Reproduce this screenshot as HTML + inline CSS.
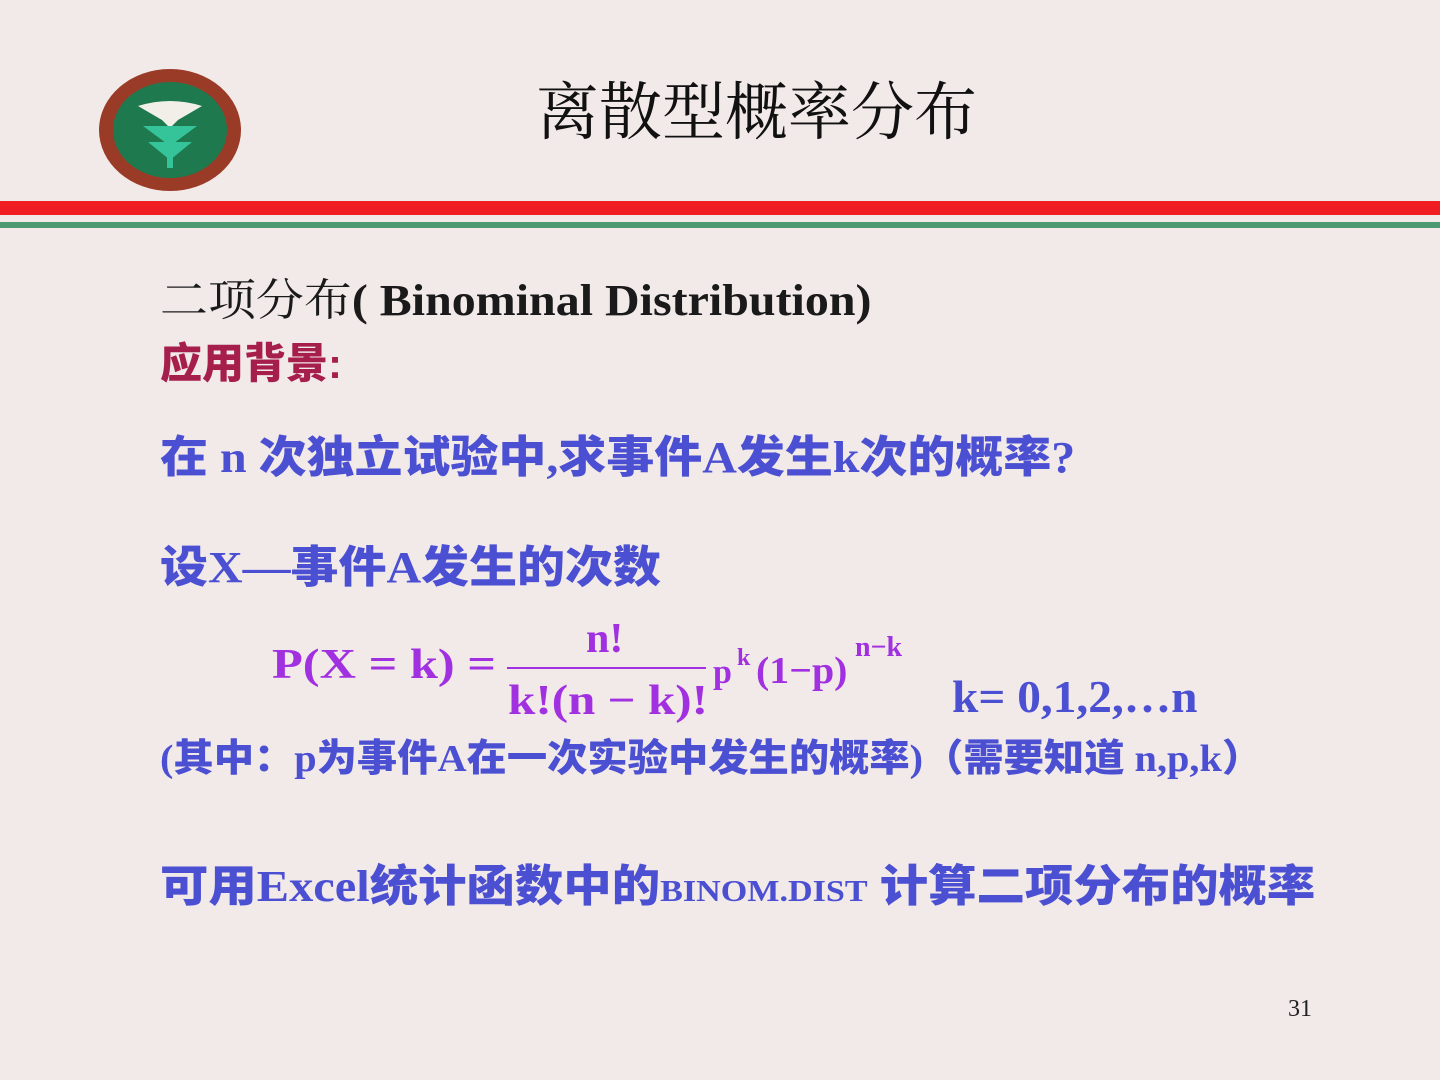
<!DOCTYPE html>
<html><head><meta charset="utf-8"><style>
body{margin:0;width:1440px;height:1080px;background:#f2e9e9;position:relative;overflow:hidden;font-family:"Liberation Serif","Noto Serif CJK SC",serif}
.a{position:absolute;white-space:nowrap;line-height:1;transform-origin:0 0}
.b{color:#4b4fd2;font-weight:900;font-family:"Liberation Serif","Noto Sans CJK SC",sans-serif}
.m{color:#a030e0;font-weight:bold;font-family:"Liberation Serif",serif}
</style></head><body>
<svg class="a" style="left:98px;top:68px" width="146" height="124" viewBox="0 0 146 124">
<ellipse cx="72" cy="62" rx="71" ry="61" fill="#9a3b28"/>
<ellipse cx="72" cy="62" rx="57" ry="48" fill="#1e7a4e"/>
<path d="M40 38 Q72 28 104 38 L80 52 L72 60 L64 52Z" fill="#f2efe8"/>
<path d="M45 58 L99 58 L72 78Z M50 74 L94 74 L72 92Z" fill="#35c49a"/>
<rect x="69" y="78" width="6" height="22" fill="#35c49a"/>
</svg>
<div class="a" style="left:536px;top:82px;font-size:63px;color:#111">离散型概率分布</div>
<div class="a" style="left:0;top:201px;width:1440px;height:14px;background:#f01e23"></div>
<div class="a" style="left:0;top:222px;width:1440px;height:6px;background:#4c9a72"></div>
<div class="a" style="left:160px;top:279px;font-size:44px;color:#1a1a1a;transform:scaleX(1.09)">二项分布<b style="font-family:'Liberation Serif',serif">( Binominal Distribution)</b></div>
<div class="a" style="left:160px;top:343px;font-size:42px;color:#a51e4c;font-weight:900;font-family:'Liberation Sans','Noto Sans CJK SC',sans-serif">应用背景:</div>
<div class="a b" style="left:160px;top:436px;font-size:44px;transform:scaleX(1.09)">在 n 次独立试验中,求事件A发生k次的概率?</div>
<div class="a b" style="left:160px;top:546px;font-size:44px;transform:scaleX(1.09)">设X—事件A发生的次数</div>
<div class="a m" style="left:272px;top:644px;font-size:42px;transform:scaleX(1.2)">P(X = k) =</div>
<div class="a m" style="left:586px;top:618px;font-size:42px">n!</div>
<div class="a" style="left:507px;top:667px;width:199px;height:2px;background:#a030e0"></div>
<div class="a m" style="left:508px;top:680px;font-size:42px;transform:scaleX(1.17)">k!(n − k)!</div>
<div class="a m" style="left:713px;top:656px;font-size:34px">p</div>
<div class="a m" style="left:737px;top:646px;font-size:24px">k</div>
<div class="a m" style="left:756px;top:652px;font-size:38px;transform:scaleX(1.05)">(1−p)</div>
<div class="a m" style="left:855px;top:634px;font-size:28px">n−k</div>
<div class="a b" style="left:952px;top:674px;font-size:46px;font-family:'Liberation Serif',serif;font-weight:bold;transform:scaleX(1.03)">k= 0,1,2,…n</div>
<div class="a b" style="left:160px;top:740px;font-size:38px;transform:scaleX(1.06)">(其中：p为事件A在一次实验中发生的概率)（需要知道 n,p,k）</div>
<div class="a b" style="left:160px;top:865px;font-size:44px;transform:scaleX(1.1)">可用Excel统计函数中的<span style="font-size:31px">BINOM.DIST</span> 计算二项分布的概率</div>
<div class="a" style="left:1288px;top:997px;font-size:24px;color:#222">31</div>
</body></html>
